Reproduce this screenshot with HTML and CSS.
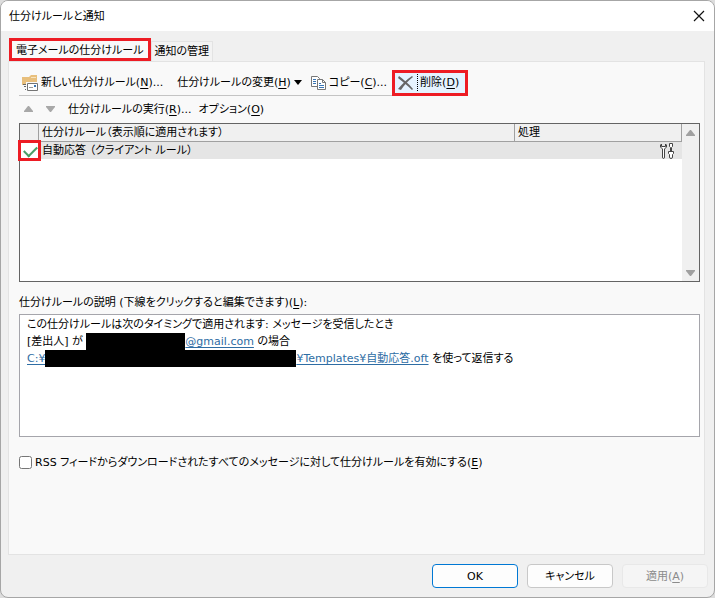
FILE: index.html
```html
<!DOCTYPE html>
<html lang="ja">
<head>
  <meta charset="UTF-8">
  <meta name="viewport" content="width=device-width, initial-scale=1.0">
  <title>仕分けルールと通知</title>
  <link rel="stylesheet" href="styles.css">
</head>
<body>
  <div class="dialog">
    <header class="titlebar">
      <h1>仕分けルールと通知</h1>
      <button class="close" aria-label="閉じる">
        <svg width="12" height="12" viewBox="0 0 12 12"><path d="M1 1l10 10M11 1L1 11" stroke="#111" stroke-width="1.2"/></svg>
      </button>
    </header>

    <div class="tabs" role="tablist">
      <button class="tab active marked" role="tab" aria-selected="true">電子メールの仕分けルール</button>
      <button class="tab" role="tab" aria-selected="false">通知の管理</button>
    </div>

    <main class="panel">
      <div class="toolbar">
        <button class="tool new">
          <svg width="18" height="17" viewBox="0 0 18 17">
            <path d="M1 3h7l2-2h6v10H1z" fill="#e8bf7c"/>
            <path d="M10 3.500h5" stroke="#f8e3bd"/>
            <path d="M5 8h12v9H5z" fill="#f9f9f9"/>
            <path d="M6.500 9.500h10v7h-10z" fill="#fff" stroke="#737373"/>
            <path d="M2 10.500h3M3 12.500h2M4 15.500h1" stroke="#666"/>
            <path d="M13 11h2v2h-2z" fill="#3a76b4"/>
            <path d="M8 13.500h4" stroke="#999"/>
          </svg>
          <span>新しい仕分けルール(<u>N</u>)...</span>
        </button>
        <button class="tool change">
          <span>仕分けルールの変更(<u>H</u>)</span>
          <svg width="8" height="5" viewBox="0 0 8 5"><path d="M0 0h8L4 5z" fill="#000"/></svg>
        </button>
        <button class="tool copy">
          <svg width="16" height="16" viewBox="0 0 16 16">
            <path d="M.5 1.500h6l2 2v8h-8z" fill="#fff" stroke="#777"/>
            <path d="M2 4.500h3M2 6.500h3M2 8.500h3" stroke="#3a76b4"/>
            <path d="M6.500 4.500h5l3 3v7h-8z" fill="#fff" stroke="#777"/>
            <path d="M11.500 4.500v3h3" fill="none" stroke="#777"/>
            <path d="M8 8.500h2M8 10.500h5M8 12.500h5" stroke="#3a76b4"/>
          </svg>
          <span>コピー(<u>C</u>)...</span>
        </button>
        <button class="tool delete marked">
          <svg width="16" height="14" viewBox="0 0 16 14">
            <path d="M1 0c4 3 9 7 14 13l-1 1C10 10 5 6 0 2z" fill="#666"/>
            <path d="M14 0l1 1C10 5 6 9 3 14l-3-1C4 8 8 4 14 0z" fill="#666"/>
          </svg>
          <span>削除(<u>D</u>)</span>
        </button>
      </div>

      <div class="toolbar second">
        <button class="move" aria-label="上へ"><svg width="9" height="6" viewBox="0 0 9 6"><path d="M4 0h1l4 5v1H0V5z" fill="#a8a8a8"/></svg></button>
        <button class="move" aria-label="下へ"><svg width="9" height="6" viewBox="0 0 9 6"><path d="M0 0h9v1L5 6H4L0 1z" fill="#a8a8a8"/></svg></button>
        <button class="tool"><span>仕分けルールの実行(<u>R</u>)...</span></button>
        <button class="tool"><span>オプション(<u>O</u>)</span></button>
      </div>

      <div class="rules">
        <table>
          <thead>
            <tr>
              <th class="col-check" aria-label="有効"></th>
              <th class="col-name">仕分けルール（表示順に適用されます）</th>
              <th>処理</th>
            </tr>
          </thead>
          <tbody>
            <tr>
              <td class="check-cell marked"><input type="checkbox" class="rule-check" aria-label="自動応答" checked></td>
              <td>自動応答 （クライアント ルール）</td>
              <td class="action">
                <svg width="14" height="16" viewBox="0 0 14 16" fill="#fff" stroke="#444">
                  <path d="M1.500 1L.5 2v2l2 2v8q0 1.500 1 1.500t1-1.500V6l2-2V2l-1-1v2.500h-4z"/>
                  <path d="M9.500.5h3v3l-1 1v4h-1v-4l-1-1z"/>
                  <path d="M8.500 8.500h5v2l-1 1V14q0 1.500-1.500 1.500T9.500 14v-2.500l-1-1z"/>
                </svg>
              </td>
            </tr>
          </tbody>
        </table>
        <div class="scrollbar" aria-hidden="true">
          <svg width="9" height="6" viewBox="0 0 9 6"><path d="M4 0h1l4 5v1H0V5z" fill="#a0a0a0"/></svg>
          <svg width="9" height="6" viewBox="0 0 9 6"><path d="M0 0h9v1L5 6H4L0 1z" fill="#a0a0a0"/></svg>
        </div>
      </div>

      <h2 id="description-label">仕分けルールの説明 (下線をクリックすると編集できます)(<u>L</u>):</h2>
      <div class="description" aria-labelledby="description-label">
        <p>この仕分けルールは次のタイミングで適用されます: メッセージを受信したとき</p>
        <p>[差出人] が <a href="#"><span class="redacted sender"></span>@gmail.com</a> の場合</p>
        <p><a href="#">C:¥<span class="redacted path"></span>¥Templates¥自動応答.oft</a> を使って返信する</p>
      </div>

      <label class="rss">
        <input type="checkbox">
        <span>RSS フィードからダウンロードされたすべてのメッセージに対して仕分けルールを有効にする(<u>E</u>)</span>
      </label>
    </main>

    <footer class="buttons">
      <button class="btn primary">OK</button>
      <button class="btn">キャンセル</button>
      <button class="btn" disabled>適用(<u>A</u>)</button>
    </footer>
  </div>
</body>
</html>
```

FILE: styles.css
```css
* {
  box-sizing: border-box;
}
body {
  margin: 0;
  background: #ddd;
  color: #000;
  font: 11px/17px "DejaVu Sans", "Noto Sans CJK JP", sans-serif;
  font-feature-settings: "palt";
}
button {
  font: inherit;
  font-feature-settings: inherit;
  color: inherit;
  border: 0;
  padding: 0;
  background: none;
  white-space: nowrap;
}
svg {
  display: block;
  flex: none;
}
u {
  text-underline-offset: 2px;
}
h1, h2, p {
  margin: 0;
  font-size: 11px;
  font-weight: normal;
}
.dialog {
  display: flex;
  flex-direction: column;
  min-height: 100vh;
  border: 1px solid #a6a6a6;
  border-radius: 8px;
  background: #f0f0f0;
  overflow: hidden;
}
.titlebar {
  display: flex;
  justify-content: space-between;
  align-items: center;
  height: 30px;
  padding: 0 9px 0 8px;
  background: #fff;
}
.marked {
  outline: 3px solid #ed1c24;
  outline-offset: -3px;
}
.tabs {
  display: flex;
  align-items: flex-end;
  padding: 7px 8px 0;
}
.tab {
  height: 20px;
  padding: 0 3px;
  border: 1px solid #e3e3e3;
  border-bottom: 0;
  background: #f3f3f3;
}
.tab.active {
  height: 23px;
  padding: 0 6px;
  background: #f9f9f9;
}
.panel {
  flex: 1;
  margin: 0 9px 0 7px;
  padding: 8px 4px 8px 10px;
  border: 1px solid #e3e3e3;
  background: #f9f9f9;
}
.toolbar {
  display: flex;
  align-items: center;
  width: fit-content;
  height: 26px;
  border-bottom: 1px solid #c4c4c4;
}
.tool {
  display: flex;
  align-items: center;
  gap: 2px;
}
.new {
  padding-left: 2px;
}
.change {
  gap: 3px;
  margin-left: 14px;
}
.copy {
  margin-left: 9px;
}
.delete {
  height: 26px;
  margin-left: 5px;
  padding: 0 9px 0 6px;
  gap: 3px;
  background: #e5f3ff;
}
.delete span {
  padding-left: 2px;
  border-left: 1px dotted #000;
}
.second {
  gap: 7px;
  padding-left: 5px;
  border: 0;
}
.move {
  width: 9px;
  margin-right: 6px;
}
.rules {
  display: flex;
  align-items: flex-start;
  min-height: 159px;
  margin-top: 1px;
  border: 1px solid #646464;
  background: #fff;
}
table {
  flex: 1;
  table-layout: fixed;
  border-collapse: separate;
  border-spacing: 0;
}
th, td {
  height: 17px;
  padding: 0 3px;
  font-weight: normal;
  line-height: 16px;
  text-align: left;
}
th {
  height: 18px;
  border-right: 1px solid #a0a0a0;
  border-bottom: 1px solid #a0a0a0;
  background: #f0f0f0;
}
td {
  background: #e5e5e5;
}
.col-check {
  width: 19px;
}
.col-name {
  width: 476px;
}
.check-cell {
  padding: 0;
  outline-offset: -1px;
  background: #fff;
}
.rule-check {
  display: block;
  appearance: none;
  width: 12px;
  height: 10px;
  margin: 0 auto;
}
.rule-check:checked::before {
  content: "";
  display: block;
  width: 11px;
  height: 6px;
  border: solid #4a9e66;
  border-width: 0 0 2px 2px;
  transform: rotate(-45deg);
}
.action svg {
  margin-left: auto;
  margin-right: 5px;
}
.scrollbar {
  display: flex;
  flex-direction: column;
  justify-content: space-between;
  align-items: center;
  align-self: stretch;
  width: 17px;
  padding: 6px 0 5px;
  background: #f0f0f0;
}
h2 {
  margin: 12px 0 3px;
}
.description {
  min-height: 123px;
  padding: 1px 7px;
  border: 1px solid #a5a5ab;
  background: #fff;
}
a {
  color: #2e6da4;
  text-underline-offset: 2px;
}
.redacted {
  display: inline-block;
  height: 17px;
  background: #000;
  vertical-align: top;
}
.sender {
  width: 99px;
}
.path {
  width: 251px;
}
.rss {
  display: flex;
  align-items: center;
  gap: 3px;
  width: fit-content;
  margin-top: 17px;
}
.rss input {
  flex: none;
  width: 13px;
  height: 13px;
  margin: 0;
}
.buttons {
  display: flex;
  justify-content: flex-end;
  gap: 9px;
  padding: 9px 6px;
}
.btn {
  width: 86px;
  height: 24px;
  border: 1px solid #c8c8c8;
  border-radius: 4px;
  background: #fdfdfd;
}
.btn.primary {
  border-color: #0078d4;
}
.btn:disabled {
  border-color: #e8e8e8;
  background: #f5f5f5;
  color: #8b8b8b;
}
```
